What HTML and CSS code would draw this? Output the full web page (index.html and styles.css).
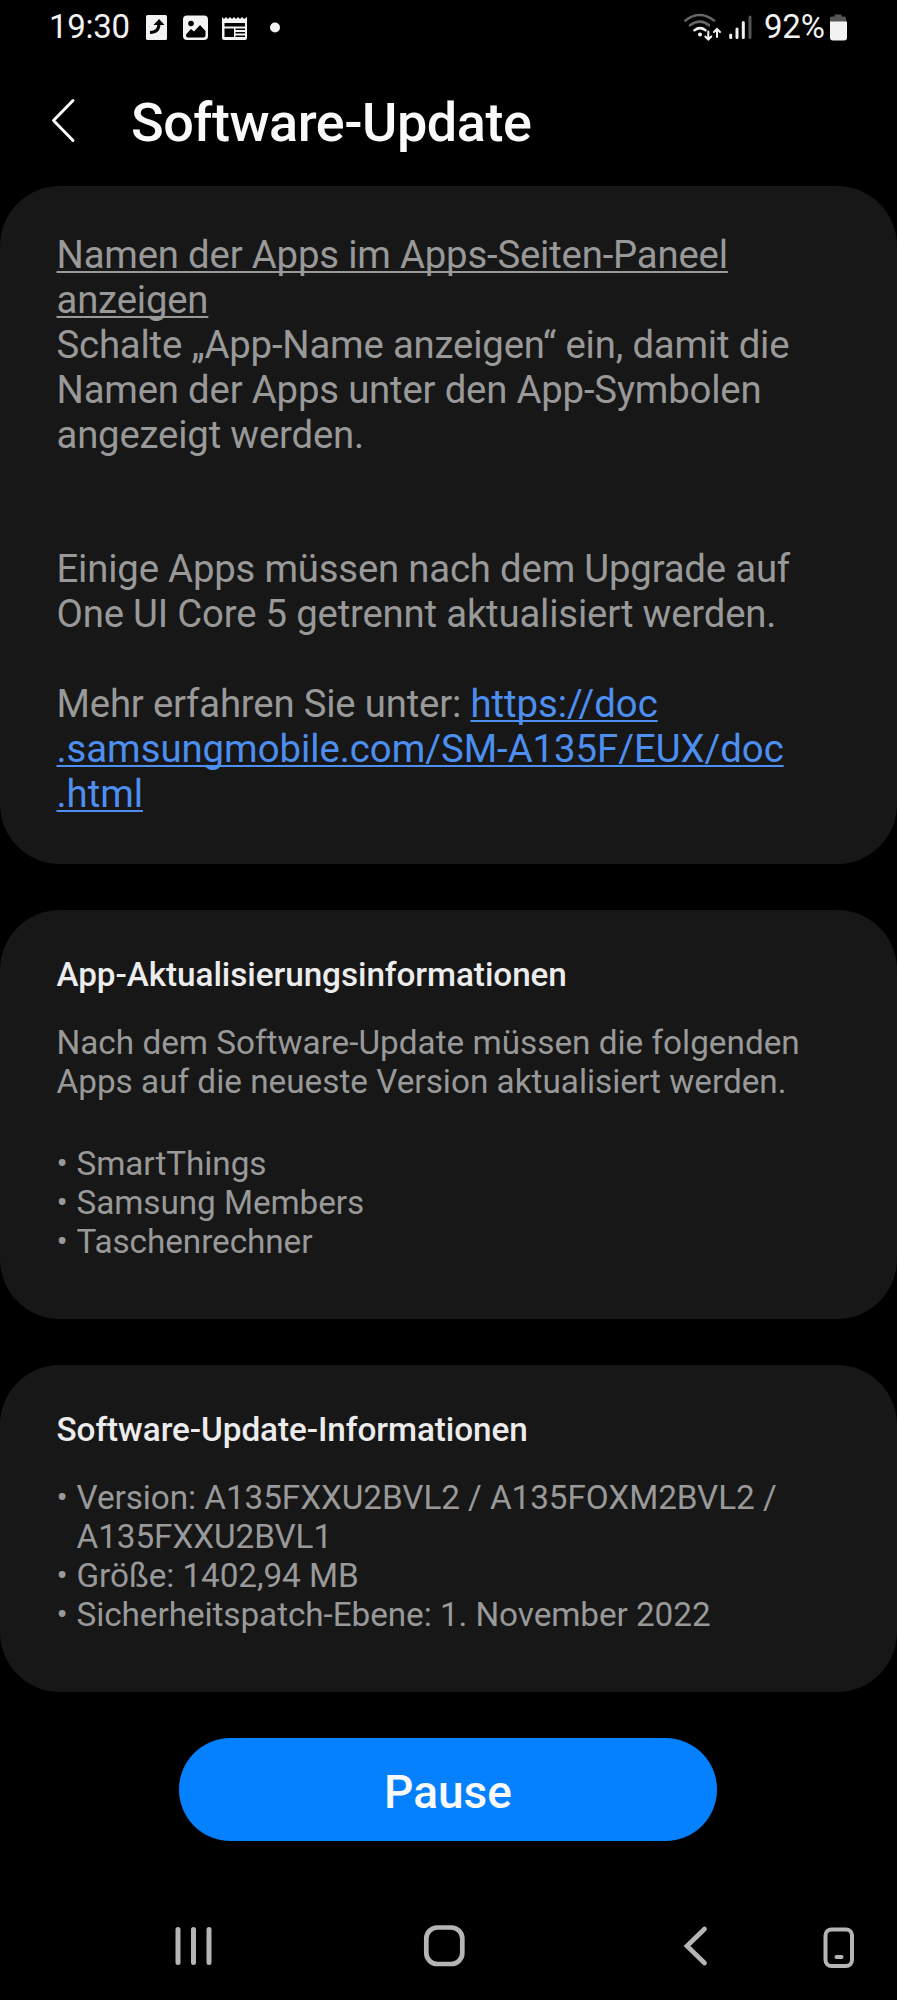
FILE: index.html
```html
<!DOCTYPE html>
<html lang="de">
<head>
<meta charset="utf-8">
<title>Software-Update</title>
<link rel="stylesheet" href="styles.css">
</head>
<body>
<div class="screen">
  <div class="status">
    <span class="clock">19:30</span>
    <svg class="notif" width="180" height="30" viewBox="140 12 180 30" fill="#f2f2f2">
      <rect x="146" y="15" width="21" height="25" rx="1.5"/>
      <path d="M150 32.500c6 0 9-3.500 9-9" fill="none" stroke="#000" stroke-width="3"/>
      <path d="M153.500 25l5.500-6 5.500 6z" fill="#000"/>
      <rect x="183" y="15.500" width="25" height="24.500" rx="4"/>
      <circle cx="191" cy="23.500" r="2.800" fill="#000"/>
      <path d="M186 34.500l5-5.500 3 2.500 6-6.500 5.500 6v4.500q0 2-2 2h-15.500q-2 0-2-2z" fill="#000"/>
      <path d="M222 17l2 2 2-2 2 2 2-2 2 2 2-2 2 2 2-2 2 2 2-2 2 2 3-2v21q0 2-2 2h-21q-2 0-2-2z"/>
      <path d="M224.500 23h20.500v3.500h-20.500zM224.500 28.500h9.500v8.500h-9.500zM235.500 28.500H245v1.500h-9.500zM235.500 32H245v1.500h-9.500zM235.500 35.500H245v1.500h-9.500z" fill="#000"/>
      <circle cx="275" cy="27.500" r="5"/>
    </svg>
    <svg class="signal" width="75" height="30" viewBox="684 12 75 30" fill="none" stroke-linecap="round">
      <path d="M686.500 20.500q14-11 28.500 0M691 25.300q10-7.500 19 0" stroke="#666" stroke-width="2.600"/>
      <path d="M695.500 30.200q5.500-4 11 0" stroke="#f2f2f2" stroke-width="2.600"/>
      <circle cx="701" cy="34.500" r="2" fill="#f2f2f2"/>
      <path d="M709.300 31.500v8M706.300 36.500l3 3 3-3M718 37v-8M715 32l3-3 3 3" stroke="#f2f2f2" stroke-width="2"/>
      <path d="M731.700 35v2.500M738 29v8.500M744.300 22.500v15" stroke="#f2f2f2" stroke-width="3"/>
      <path d="M751 17v20.500" stroke="#555" stroke-width="3"/>
    </svg>
    <span class="percent">92%</span>
    <svg class="battery" width="18" height="28" viewBox="830 13 18 28">
      <path d="M835.500 14.500h7v2.500h-7zM831 18q0-1.500 1.500-1.500h13q1.500 0 1.500 1.500v4h-16z" fill="#555"/>
      <path d="M831 21.500h17v16q0 3-3 3h-11q-3 0-3-3z" fill="#f2f2f2"/>
    </svg>
  </div>

  <header class="header">
    <svg width="26" height="48" viewBox="50 96 26 48" fill="none" stroke="#fafafa" stroke-width="3" stroke-linecap="round" stroke-linejoin="round"><path d="M73 100.500L53.500 120.500 73 140.500"/></svg>
    <h1 class="title">Software-Update</h1>
  </header>

  <main class="cards">
    <section class="card notes">
      <p class="para"><u>Namen der Apps im Apps-Seiten-Paneel<br>anzeigen</u><br>Schalte „App-Name anzeigen“ ein, damit die<br>Namen der Apps unter den App-Symbolen<br>angezeigt werden.</p>
      <p class="para after">Einige Apps müssen nach dem Upgrade auf<br>One UI Core 5 getrennt aktualisiert werden.</p>
      <p class="para more">Mehr erfahren Sie unter: <a class="link">https://doc<br>.samsungmobile.com/SM-A135F/EUX/doc<br>.html</a></p>
    </section>

    <section class="card apps">
      <h2 class="heading">App-Aktualisierungsinformationen</h2>
      <p class="text">Nach dem Software-Update müssen die folgenden<br>Apps auf die neueste Version aktualisiert werden.</p>
      <ul class="list spaced">
        <li class="item">SmartThings</li>
        <li class="item">Samsung Members</li>
        <li class="item">Taschenrechner</li>
      </ul>
    </section>

    <section class="card info">
      <h2 class="heading">Software-Update-Informationen</h2>
      <ul class="list">
        <li class="item">Version: A135FXXU2BVL2 / A135FOXM2BVL2 /<br>A135FXXU2BVL1</li>
        <li class="item">Größe: 1402,94 MB</li>
        <li class="item">Sicherheitspatch-Ebene: 1. November 2022</li>
      </ul>
    </section>
  </main>

  <button class="pause">Pause</button>

  <nav class="nav">
    <svg width="38" height="46" viewBox="174 1924 38 46" stroke="#b5b5b5" stroke-width="5" stroke-linecap="round"><path d="M178 1929.500v33M193.500 1929.500v33M209 1929.500v33"/></svg>
    <svg class="home" width="42" height="46" viewBox="423 1924 42 46" fill="none" stroke="#b5b5b5" stroke-width="4.700"><rect x="426.300" y="1927.500" width="36" height="36.500" rx="11"/></svg>
    <svg class="back" width="26" height="46" viewBox="682 1924 26 46" fill="none" stroke="#b5b5b5" stroke-width="4.700" stroke-linecap="round"><path d="M704.500 1929L687 1946l17.500 17"/></svg>
    <svg class="phone" width="34" height="46" viewBox="822 1924 34 46" fill="none" stroke="#b5b5b5" stroke-width="4"><rect x="825.500" y="1929.500" width="26.500" height="36.500" rx="6"/><path d="M836.500 1957h5" stroke-linecap="round"/></svg>
  </nav>
</div>
</body>
</html>
```
FILE: styles.css
```css
* { box-sizing: border-box; margin: 0; padding: 0; }

body { background: #000; font-family: Roboto, "Liberation Sans", sans-serif; }

.screen {
  width: 897px;
  height: 2000px;
  overflow: hidden;
  display: flex;
  flex-direction: column;
  background: #000;
}

.status {
  height: 56px;
  padding: 8px 0 0 49px;
  display: flex;
  align-items: flex-start;
  color: #f2f2f2;
  font-size: 33px;
  line-height: 38px;
}
.clock { width: 91px; white-space: nowrap; letter-spacing: -0.3px; }
.notif { margin-top: 4px; }
.signal { margin: 4px 0 0 363px; }
.percent { width: 71px; padding-left: 6px; white-space: nowrap; letter-spacing: -0.2px; }
.battery { margin-top: 5px; }

.header {
  height: 130px;
  padding: 34px 0 0 50px;
  display: flex;
  align-items: flex-start;
  gap: 55px;
}
.header svg { margin-top: 6px; }
.title {
  margin-top: 1px;
  color: #fafafa;
  font-size: 54px;
  line-height: 64px;
  font-weight: 500;
  letter-spacing: -0.48px;
  white-space: nowrap;
}

.cards { display: flex; flex-direction: column; gap: 46px; }
.card {
  background: #171717;
  border-radius: 60px;
  padding-left: 56.500px;
  color: #999;
  white-space: nowrap;
}
.notes { height: 678px; padding-top: 47.400px; }
.apps { height: 409px; padding-top: 45px; }
.info { height: 327px; padding-top: 45px; }

.para { font-size: 38.300px; line-height: 44.870px; letter-spacing: -0.18px; }
.para u, .link {
  text-decoration: underline;
  text-decoration-thickness: 2px;
  text-underline-offset: 3px;
  text-decoration-skip-ink: none;
}
.after { margin-top: 89.700px; }
.more { margin-top: 44.870px; }
.link { color: #4d8ff0; letter-spacing: -0.03px; }

.heading { color: #ececec; font-size: 33.300px; line-height: 39px; font-weight: 500; letter-spacing: -0.07px; }
.text { margin-top: 29.300px; font-size: 33.300px; line-height: 39px; }
.list { margin-top: 29.300px; list-style: none; font-size: 33.300px; line-height: 39px; letter-spacing: -0.07px; }
.spaced { margin-top: 43px; }
.item { display: flex; }
.item::before { content: "•"; width: 20px; flex: none; }

.pause {
  width: 538px;
  height: 103px;
  margin: 46px 0 0 179px;
  padding-top: 4px;
  border: 0;
  border-radius: 52px;
  background: #0581ff;
  color: #fafafa;
  font: 500 46px/60px Roboto, "Liberation Sans", sans-serif;
}

.nav { margin-top: 83px; padding-left: 174px; display: flex; }
.home { margin-left: 211px; }
.back { margin-left: 217px; }
.phone { margin-left: 114px; }
```
